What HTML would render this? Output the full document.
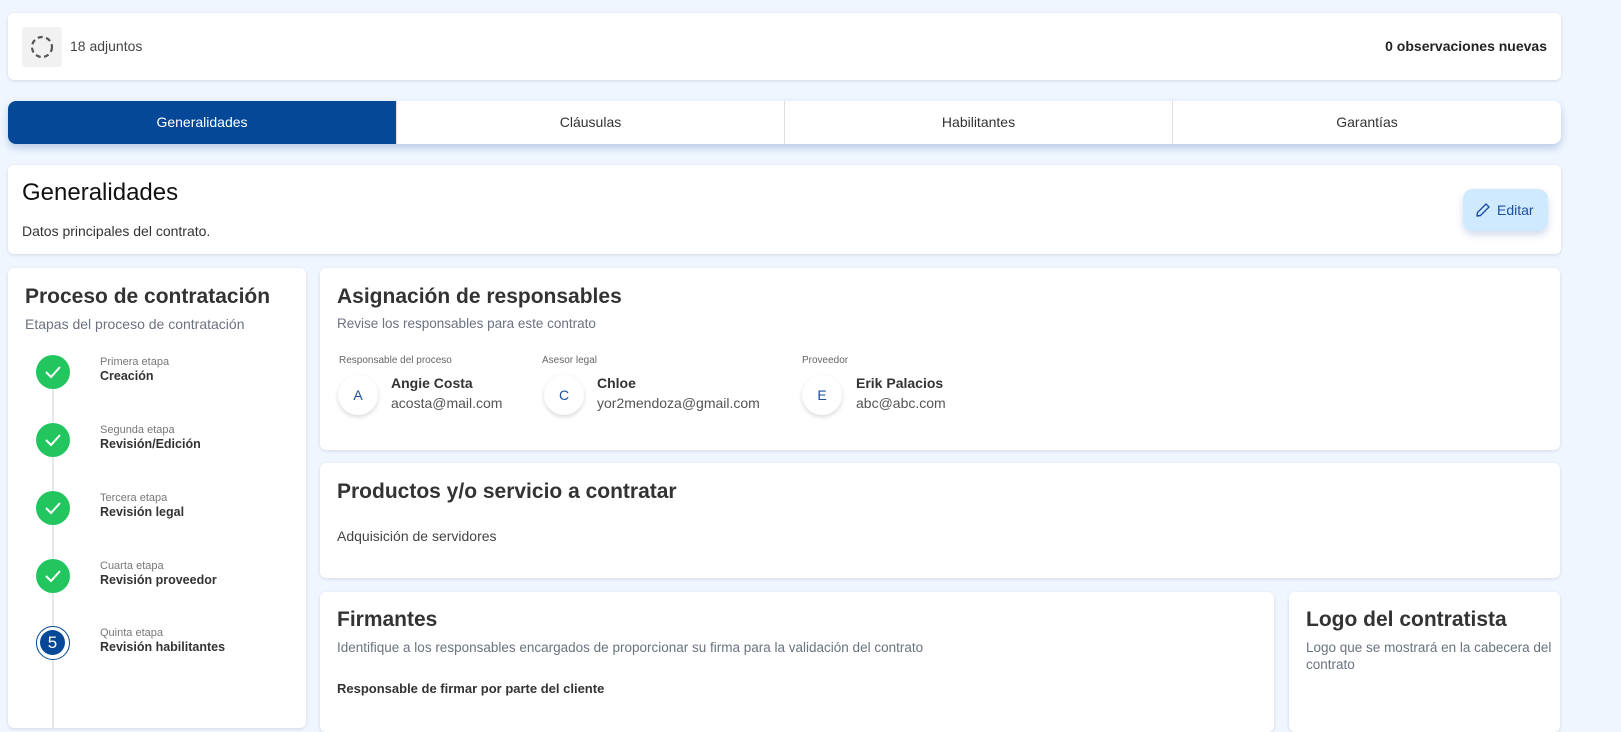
<!DOCTYPE html>
<html><head><meta charset="utf-8"><style>
*{box-sizing:border-box;margin:0;padding:0}
body{width:1621px;height:720px;overflow:hidden;background:#eff6ff;font-family:"Liberation Sans",sans-serif;color:#333;position:relative}
.card{position:absolute;background:#fff;border-radius:6px;box-shadow:0 1px 3px rgba(0,0,0,.12)}
.a{position:absolute;white-space:nowrap}
h2{font-size:21px;font-weight:bold;color:#333}
.sub{font-size:14px;color:#6b7280}
.step{position:absolute;left:28px;width:34px;height:34px;border-radius:50%;background:#22c55e}
.step svg{position:absolute;left:8px;top:9px}
.sl{position:absolute;left:92px;font-size:11px;color:#777}
.sn{position:absolute;left:92px;font-size:12.5px;font-weight:bold;color:#333}
.av{position:absolute;width:40px;height:40px;border-radius:50%;background:#fff;box-shadow:0 2px 5px rgba(0,0,0,.15);text-align:center;line-height:40px;font-size:14px;color:#1e4fa0}
</style></head><body>
<div class="card" style="left:8px;top:13px;width:1553px;height:67px">
  <div class="a" style="left:14px;top:14px;width:40px;height:40px;background:#f1f1f1;border-radius:4px"><svg width="40" height="40"><circle cx="20" cy="20" r="10" fill="none" stroke="#555" stroke-width="2.2" stroke-dasharray="5 3.5"/></svg></div>
  <div class="a" style="left:62px;top:25px;font-size:14px;color:#444">18 adjuntos</div>
  <div class="a" style="right:14px;top:25px;font-size:14px;font-weight:bold;color:#222">0 observaciones nuevas</div>
</div>
<div class="a" style="left:8px;top:101px;width:1553px;height:43px;border-radius:8px;background:#fff;box-shadow:0 4px 8px rgba(30,80,160,.25);overflow:hidden">
  <div class="a" style="left:0;top:0;width:388px;height:43px;background:#044897;color:#fff;font-size:14px;text-align:center;line-height:43px">Generalidades</div>
  <div class="a" style="left:388px;top:0;width:388px;height:43px;font-size:14px;text-align:center;line-height:43px;border-left:1px solid #ddd">Cláusulas</div>
  <div class="a" style="left:776px;top:0;width:388px;height:43px;font-size:14px;text-align:center;line-height:43px;border-left:1px solid #ddd">Habilitantes</div>
  <div class="a" style="left:1164px;top:0;width:389px;height:43px;font-size:14px;text-align:center;line-height:43px;border-left:1px solid #ddd">Garantías</div>
</div>
<div class="card" style="left:8px;top:165px;width:1553px;height:89px">
  <div class="a" style="left:14px;top:14px;font-size:24px;color:#111">Generalidades</div>
  <div class="a" style="left:14px;top:58px;font-size:14px;color:#333">Datos principales del contrato.</div>
  <div class="a" style="left:1455px;top:24px;width:85px;height:42px;background:#cfeafe;border-radius:10px;box-shadow:0 4px 8px rgba(30,80,160,.2);color:#1e4fa0;font-size:14px;line-height:42px;padding-left:34px">Editar<svg class="a" style="left:12px;top:13px" width="16" height="16" viewBox="0 0 16 16"><path d="M11 2l3 3-8.5 8.5L2 14l.5-3.5z" fill="none" stroke="#1e4fa0" stroke-width="1.4" stroke-linejoin="round"/></svg></div>
</div>
<div class="card" style="left:8px;top:268px;width:298px;height:460px">
  <div class="a" style="left:17px;top:17px"><h2>Proceso de contratación</h2></div>
  <div class="a sub" style="left:17px;top:48px">Etapas del proceso de contratación</div>
  <div class="a" style="left:44px;top:100px;width:2px;height:360px;background:#e5e7eb"></div>
  <div class="step" style="top:87px"><svg width="18" height="16"><path d="M2 8l5 5 9-10" fill="none" stroke="#fff" stroke-width="2"/></svg></div>
  <div class="sl" style="top:88px">Primera etapa</div><div class="sn" style="top:101px">Creación</div>
  <div class="step" style="top:155px"><svg width="18" height="16"><path d="M2 8l5 5 9-10" fill="none" stroke="#fff" stroke-width="2"/></svg></div>
  <div class="sl" style="top:156px">Segunda etapa</div><div class="sn" style="top:169px">Revisión/Edición</div>
  <div class="step" style="top:223px"><svg width="18" height="16"><path d="M2 8l5 5 9-10" fill="none" stroke="#fff" stroke-width="2"/></svg></div>
  <div class="sl" style="top:224px">Tercera etapa</div><div class="sn" style="top:237px">Revisión legal</div>
  <div class="step" style="top:291px"><svg width="18" height="16"><path d="M2 8l5 5 9-10" fill="none" stroke="#fff" stroke-width="2"/></svg></div>
  <div class="sl" style="top:292px">Cuarta etapa</div><div class="sn" style="top:305px">Revisión proveedor</div>
  <div class="step" style="top:358px;background:#fff;border:1.5px solid #044897"><div class="a" style="left:3px;top:3px;width:25px;height:25px;border-radius:50%;background:#044897;color:#fff;text-align:center;line-height:25px;font-size:17px">5</div></div>
  <div class="sl" style="top:359px">Quinta etapa</div><div class="sn" style="top:372px">Revisión habilitantes</div>
</div>
<div class="card" style="left:320px;top:268px;width:1240px;height:182px">
  <div class="a" style="left:17px;top:17px"><h2>Asignación de responsables</h2></div>
  <div class="a sub" style="left:17px;top:48px;font-size:13.5px">Revise los responsables para este contrato</div>
  <div class="a" style="left:19px;top:87px;font-size:10px;color:#666">Responsable del proceso</div>
  <div class="av" style="left:18px;top:107px">A</div>
  <div class="a" style="left:71px;top:107px;font-size:14px;font-weight:bold">Angie Costa</div>
  <div class="a" style="left:71px;top:127px;font-size:14px;color:#555">acosta@mail.com</div>
  <div class="a" style="left:222px;top:87px;font-size:10px;color:#666">Asesor legal</div>
  <div class="av" style="left:224px;top:107px">C</div>
  <div class="a" style="left:277px;top:107px;font-size:14px;font-weight:bold">Chloe</div>
  <div class="a" style="left:277px;top:127px;font-size:14px;color:#555">yor2mendoza@gmail.com</div>
  <div class="a" style="left:482px;top:87px;font-size:10px;color:#666">Proveedor</div>
  <div class="av" style="left:482px;top:107px">E</div>
  <div class="a" style="left:536px;top:107px;font-size:14px;font-weight:bold">Erik Palacios</div>
  <div class="a" style="left:536px;top:127px;font-size:14px;color:#555">abc@abc.com</div>
</div>
<div class="card" style="left:320px;top:463px;width:1240px;height:115px">
  <div class="a" style="left:17px;top:17px"><h2>Productos y/o servicio a contratar</h2></div>
  <div class="a" style="left:17px;top:65px;font-size:14px;color:#444">Adquisición de servidores</div>
</div>
<div class="card" style="left:320px;top:592px;width:954px;height:140px">
  <div class="a" style="left:17px;top:16px"><h2>Firmantes</h2></div>
  <div class="a sub" style="left:17px;top:48px;font-size:13.5px">Identifique a los responsables encargados de proporcionar su firma para la validación del contrato</div>
  <div class="a" style="left:17px;top:89px;font-size:13px;font-weight:bold">Responsable de firmar por parte del cliente</div>
</div>
<div class="card" style="left:1289px;top:592px;width:271px;height:140px">
  <div class="a" style="left:17px;top:16px"><h2>Logo del contratista</h2></div>
  <div class="a sub" style="left:17px;top:47px;font-size:13.5px;line-height:17px;white-space:normal;width:250px">Logo que se mostrará en la cabecera del contrato</div>
</div>
</body></html>
